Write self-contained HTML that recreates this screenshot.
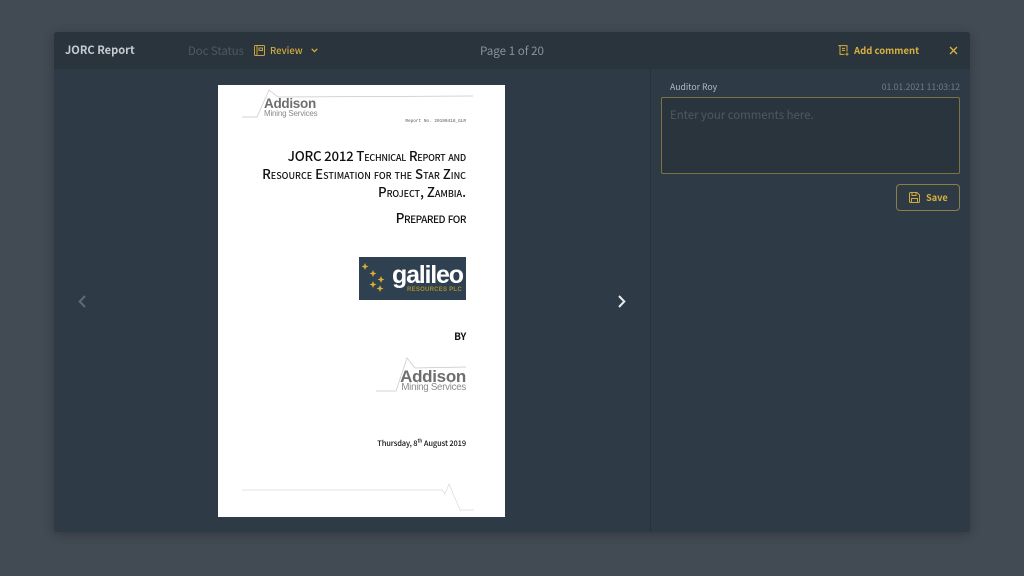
<!DOCTYPE html>
<html><head><meta charset="utf-8"><title>JORC Report</title>
<style>
html,body{margin:0;padding:0;width:1024px;height:576px;overflow:hidden;background:#424a53;font-family:"Noto Sans CJK SC","Liberation Sans",sans-serif}
.a{position:absolute;white-space:nowrap;line-height:16px}
#modal{position:absolute;left:54px;top:32px;width:916px;height:500px;background:#2e3a45;border-radius:3px;box-shadow:0 2px 10px rgba(30,36,42,.45);overflow:hidden}
#head{position:absolute;left:54px;top:32px;width:916px;height:37px;background:#29343d;border-radius:3px 3px 0 0}
#div{position:absolute;left:650px;top:69px;width:1px;height:463px;background:#28323b}
#page{position:absolute;left:218px;top:85px;width:287px;height:432px;background:#fff}
.d{position:absolute;white-space:nowrap;color:#111;text-align:right;font-family:"Noto Sans CJK SC","Liberation Sans",sans-serif;right:39px;font-variant:small-caps;font-size:13.3px;font-weight:500;line-height:18px;letter-spacing:-.3px}
svg{position:absolute;overflow:visible}
</style></head><body>
<div id="modal"></div><div id="head"></div><div id="div"></div>
<div class="a" style="left:65px;top:42px;font-size:11.1px;font-weight:700;color:#c6ccd1">JORC Report</div>
<div class="a" style="left:188px;top:43px;font-size:11.3px;color:#4f5a63">Doc Status</div>
<svg style="left:254px;top:45px" width="11" height="11" viewBox="0 0 11 11" fill="none" stroke="#c9a33c" stroke-width="1"><rect x=".5" y=".5" width="10" height="10" rx="1"/><path d="M3 .5v10M5 3h3.500v2.500H5z"/></svg>
<div class="a" style="left:270px;top:42px;font-size:9.5px;font-weight:500;color:#d0aa3b">Review</div>
<svg style="left:311px;top:48px" width="7" height="5" viewBox="0 0 7 5" fill="none" stroke="#d0aa3b" stroke-width="1.3"><path d="M.7.8l2.800 2.800L6.300.8"/></svg>
<div class="a" style="left:480px;top:43px;font-size:11.6px;color:#87929b">Page 1 of 20</div>
<svg style="left:838px;top:45px" width="12" height="11" viewBox="0 0 12 11" fill="none" stroke="#d6ae3c" stroke-width="1"><path d="M.3.6h8.700v6M2 .6v8.800h4.500M4 3.400h3M4 5.400h3M9 7.600v3M7.500 9.100h3"/></svg>
<div class="a" style="left:854px;top:42px;font-size:9.5px;font-weight:700;color:#d8b03e">Add comment</div>
<svg style="left:949px;top:46px" width="9" height="9" viewBox="0 0 9 9" fill="none" stroke="#dcb340" stroke-width="1.300"><path d="M1 1l7 7M8 1L1 8"/></svg>

<svg style="left:78px;top:295px" width="8" height="13" viewBox="0 0 8 13" fill="none" stroke="#5f6a73" stroke-width="2"><path d="M7 1L1.700 6.500 7 12"/></svg>
<svg style="left:618px;top:295px" width="8" height="13" viewBox="0 0 8 13" fill="none" stroke="#e8ebed" stroke-width="2"><path d="M1 1l5.300 5.500L1 12"/></svg>

<div id="page">
 <svg style="left:0;top:0" width="287" height="432" fill="none" stroke="#c9c5c6" stroke-width=".7">
  <path d="M24 32h15L51 5l9 7L255 11"/>
  <path d="M158 306h20L189 273l8 10L248 282"/>
  <path d="M24 405h200l3 4 4-10 11 26h14" stroke="#dcd8d9"/>
 </svg>
 <div class="a" style="left:46px;top:11px;font:700 13.500px/16px 'Liberation Sans',sans-serif;color:#6e6e70;letter-spacing:-.3px">Addison</div>
 <div class="a" style="left:46px;top:23px;font:8px/11px 'Liberation Sans',sans-serif;color:#8a8a8c;letter-spacing:-.2px">Mining Services</div>
 <div class="a" style="right:39px;top:33px;font:4.400px/7px 'Liberation Mono',monospace;color:#555">Report No. 20190418_GLR</div>
 <div class="d" style="top:62px;letter-spacing:-.23px">JORC 2012 Technical Report and</div>
 <div class="d" style="top:80px;letter-spacing:0">Resource Estimation for the Star Zinc</div>
 <div class="d" style="top:98px;letter-spacing:-.05px">Project, Zambia.</div>
 <div class="d" style="top:123px;font-size:13.6px;letter-spacing:-.45px">Prepared for</div>
 <div style="position:absolute;left:141px;top:172px;width:107px;height:43px;background:#2f4150"></div>
 <svg style="left:141px;top:172px" width="107" height="43" fill="#e0ae2e"><path d="M6 6l1 2.500 2.500 1-2.500 1-1 2.500-1-2.500-2.500-1 2.500-1zM14 13l1 2.500 2.500 1-2.500 1-1 2.500-1-2.500-2.500-1 2.500-1zM14 24l1 2.500 2.500 1-2.500 1-1 2.500-1-2.500-2.500-1 2.500-1zM22 19l1 2.500 2.500 1-2.500 1-1 2.500-1-2.500-2.500-1 2.500-1zM21 28l1 2.500 2.500 1-2.500 1-1 2.500-1-2.500-2.500-1 2.500-1z"/></svg>
 <div class="a" style="left:174px;top:176px;font:700 25px/28px 'Liberation Sans',sans-serif;color:#fff;letter-spacing:-1.200px">galileo</div>
 <div class="a" style="left:189px;top:201px;font:700 6px/8px 'Liberation Sans',sans-serif;color:#a98a2c;letter-spacing:.25px">RESOURCES PLC</div>
 <div class="d" style="top:242px;font-size:10px;font-weight:700;font-variant:normal">BY</div>
 <div class="a" style="right:39px;top:282px;font:700 17px/20px 'Liberation Sans',sans-serif;color:#6e6e70;letter-spacing:-.3px">Addison</div>
 <div class="a" style="right:39px;top:297px;font:9.700px/12px 'Liberation Sans',sans-serif;color:#8a8a8c;letter-spacing:-.25px">Mining Services</div>
 <div class="d" style="top:350px;font-size:7.500px;font-weight:500;font-variant:normal;letter-spacing:-.12px">Thursday, 8<sup style="font-size:5px;line-height:0">th</sup> August 2019</div>
</div>

<div class="a" style="left:670px;top:79px;font-size:8.700px;color:#b4bcc2">Auditor Roy</div>
<div class="a" style="right:64px;top:79px;font-size:8.600px;color:#717d86">01.01.2021 11:03:12</div>
<div style="position:absolute;left:661px;top:97px;width:297px;height:75px;background:#29343d;border:1px solid #7d7242;border-radius:2px"></div>
<div class="a" style="left:670px;top:107px;font-size:11.400px;color:#4e5962">Enter your comments here.</div>
<div style="position:absolute;left:896px;top:184px;width:62px;height:25px;border:1px solid #8c7f45;border-radius:4px"></div>
<svg style="left:909px;top:192px" width="11" height="11" viewBox="0 0 11 11" fill="none" stroke="#cfa93c" stroke-width="1"><path d="M.5 1.500a1 1 0 011-1h6.500l2.500 2.500v6.500a1 1 0 01-1 1h-8a1 1 0 01-1-1zM3 .5v3h4v-3M2.500 10.500v-4h6v4"/></svg>
<div class="a" style="left:926px;top:189px;font-size:9.200px;font-weight:700;color:#d8b03e">Save</div>
</body></html>
